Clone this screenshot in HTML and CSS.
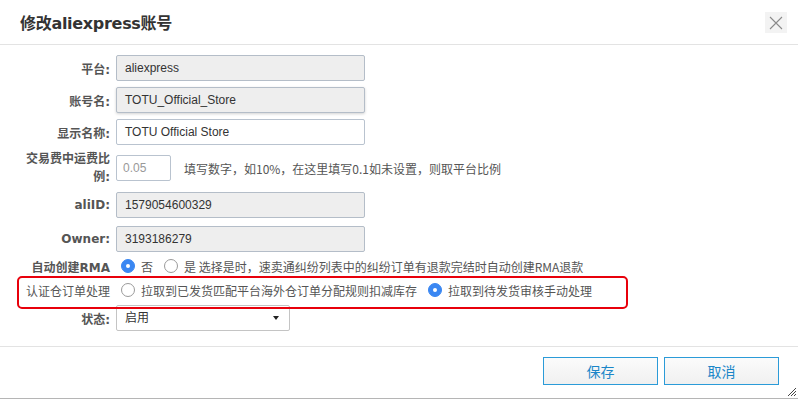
FILE: index.html
```
<!DOCTYPE html>
<html lang="zh-CN">
<head>
<meta charset="utf-8">
<title>修改aliexpress账号</title>
<link rel="stylesheet" href="styles.css">
</head>
<body>
<div class="dialog">
  <div class="header">
    <h1 class="title">修改aliexpress账号</h1>
    <button class="close" type="button" aria-label="关闭">
      <svg width="14" height="14" viewBox="0 0 14 14"><path d="M1 1L13 13M13 1L1 13" stroke="#8a8a8a" stroke-width="1.1" fill="none"/></svg>
    </button>
  </div>
  <div class="body">
    <div class="row r1">
      <div class="lbl">平台:</div>
      <div class="field ro">aliexpress</div>
    </div>
    <div class="row r2">
      <div class="lbl">账号名:</div>
      <div class="field ro shadow">TOTU_Official_Store</div>
    </div>
    <div class="row r3">
      <div class="lbl">显示名称:</div>
      <div class="field">TOTU Official Store</div>
    </div>
    <div class="row r4">
      <div class="lbl two">交易费中运费比<br>例:</div>
      <div class="field small placeholder">0.05</div>
      <span class="help">填写数字，如10%，在这里填写0.1如未设置，则取平台比例</span>
    </div>
    <div class="row r5">
      <div class="lbl">aliID:</div>
      <div class="field ro">1579054600329</div>
    </div>
    <div class="row r6">
      <div class="lbl">Owner:</div>
      <div class="field ro">3193186279</div>
    </div>
    <div class="row r7 radios">
      <div class="lbl">自动创建RMA</div>
      <span class="radio on"></span><span class="rtext">否</span>
      <span class="radio"></span><span class="rtext">是 选择是时，速卖通纠纷列表中的纠纷订单有退款完结时自动创建RMA退款</span>
    </div>
    <div class="row r8 radios marked">
      <div class="lbl normal">认证仓订单处理</div>
      <span class="radio"></span><span class="rtext">拉取到已发货匹配平台海外仓订单分配规则扣减库存</span>
      <span class="radio on"></span><span class="rtext">拉取到待发货审核手动处理</span>
    </div>
    <div class="row r9">
      <div class="lbl">状态:</div>
      <div class="field select">启用<span class="caret"></span></div>
    </div>
  </div>
  <div class="footer">
    <button class="btn" type="button">保存</button>
    <button class="btn" type="button">取消</button>
  </div>
  <svg class="grip" width="12" height="12" viewBox="0 0 12 12"><path d="M11 3L3 11M11 6L6 11M11 9L9 11" stroke="#444" stroke-width="1" fill="none"/></svg>
</div>
</body>
</html>
```
FILE: styles.css
```
* { box-sizing: border-box; }
html, body { margin: 0; padding: 0; background: #fff; }
body {
  font-family: "Liberation Sans", "Noto Sans CJK SC", sans-serif;
  font-size: 12px;
  color: #333;
}
.dialog {
  position: relative;
  width: 798px;
  height: 399px;
  border-bottom: 1px solid #b5b5b5;
  overflow: hidden;
}
.header {
  height: 45px;
  border-bottom: 1px solid #e3e3e3;
  display: flex;
  align-items: center;
  justify-content: space-between;
  padding: 0 11px 0 20px;
}
.title {
  margin: 0;
  font-family: "DejaVu Sans", "Noto Sans CJK SC", sans-serif;
  font-size: 16px;
  font-weight: bold;
  color: #333;
  letter-spacing: -0.3px;
}
.close {
  width: 22px;
  height: 21px;
  border: 0;
  padding: 0;
  background: #f3f3f3;
  display: flex;
  align-items: center;
  justify-content: center;
  margin-top: 1px;
}
.body { padding-top: 10px; }
.row {
  display: flex;
  align-items: center;
  min-height: 26px;
}
.r1, .r2 { margin-bottom: 6px; }
.r3 { margin-bottom: 5px; }
.r4 { margin-bottom: 6px; min-height: 36px; }
.r5 { margin-bottom: 8px; }
.r6 { margin-bottom: 4px; }
.r7 { min-height: 20px; }
.r8 { min-height: 28px; margin-bottom: 1px; }
.lbl {
  width: 116px;
  padding-right: 6px;
  text-align: right;
  font-family: "DejaVu Sans", "Noto Sans CJK SC", sans-serif;
  font-weight: bold;
  color: #555;
  font-size: 12px;
  flex: none;
}
.lbl.two { line-height: 18px; }
.lbl.normal { font-weight: normal; font-family: "Noto Sans CJK SC", sans-serif; }
.field {
  width: 249px;
  height: 26px;
  border: 1px solid #b9c3cf;
  border-radius: 2px;
  background: #fff;
  padding: 0 8px;
  line-height: 24px;
  color: #333;
  white-space: nowrap;
}
.field.ro { background: #eeeeee; border-color: #b4bdc8; }
.field.shadow { box-shadow: 0 1px 3px rgba(0,0,0,0.18); }
.field.small { width: 55px; }
.field.placeholder { color: #999; padding-left: 6px; }
.help {
  margin-left: 13px;
  color: #555;
  font-family: "Noto Sans CJK SC", sans-serif;
}
.radios .rtext {
  color: #555;
  font-family: "Noto Sans CJK SC", sans-serif;
  margin-right: 6px;
}
.radio {
  width: 14px;
  height: 14px;
  border-radius: 50%;
  border: 1px solid #9a9a9a;
  background: #fff;
  margin: 0 6px 0 5px;
  flex: none;
  display: flex;
  align-items: center;
  justify-content: center;
}
.radio.on { background: #3a87f2; border-color: #3a87f2; }
.radio.on::after {
  content: "";
  width: 4px;
  height: 4px;
  border-radius: 50%;
  background: #fff;
}
.marked { position: relative; }
.marked::after {
  content: "";
  position: absolute;
  left: 17px;
  top: 0;
  width: 607px;
  height: 29px;
  border: 2.5px solid #e8000b;
  border-radius: 5px;
}
.field.select {
  width: 174px;
  border-color: #c4c4c4;
  display: flex;
  align-items: center;
  justify-content: space-between;
  padding-right: 10px;
}
.caret {
  width: 0;
  height: 0;
  border-left: 3px solid transparent;
  border-right: 3px solid transparent;
  border-top: 4px solid #222;
}
.footer {
  margin-top: 15px;
  border-top: 1px solid #e3e3e3;
  padding: 10px 19px 0 0;
  display: flex;
  justify-content: flex-end;
  gap: 6px;
}
.btn {
  width: 115px;
  height: 28px;
  border: 1px solid #2b9bd8;
  background: linear-gradient(#fbfbfb, #f0f0f0);
  color: #1a86c8;
  font-family: "Noto Sans CJK SC", sans-serif;
  font-size: 14px;
  padding: 0;
}
.grip {
  position: absolute;
  right: 1px;
  bottom: 1px;
}
```
